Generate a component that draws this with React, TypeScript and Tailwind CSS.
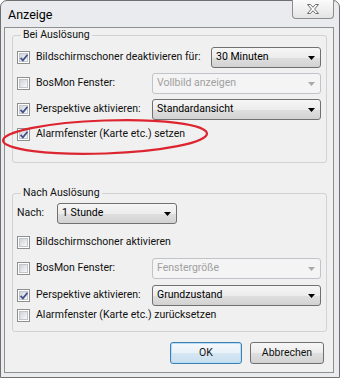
import React from "react";

function CheckBox({ checked }: { checked?: boolean }) {
  return (
    <span className="relative flex h-[13px] w-[13px] shrink-0 items-center justify-center border border-[#8e8f8f] bg-white">
      <span className="h-[9px] w-[9px] border border-[#c2c6cb] bg-[linear-gradient(135deg,#cfd3d8,#f8f8f8)]" />
      {checked && (
        <svg className="absolute left-[1px] top-[1px]" width="10" height="10" viewBox="0 0 10 10">
          <path d="M1.6 4.9 L3.9 7.4 L8.5 1.7" fill="none" stroke="#3e4f8c" strokeWidth="1.7" />
        </svg>
      )}
    </span>
  );
}

function Arrow({ disabled }: { disabled?: boolean }) {
  return (
    <svg width="7" height="4" viewBox="0 0 7 4" className="shrink-0">
      <path d="M0 0H7L3.5 4Z" fill={disabled ? "#a9a9a9" : "#000"} />
    </svg>
  );
}

function Select({ value, disabled, width }: { value: string; disabled?: boolean; width: string }) {
  return (
    <div
      className={
        "flex h-[21px] shrink-0 items-center justify-between rounded-[3px] border pl-[4px] pr-[5px] " +
        width +
        (disabled
          ? " border-[#c0c3c7] bg-[#f4f4f4] text-[#a0a0a0]"
          : " border-[#707070] bg-[linear-gradient(to_bottom,#f6f6f6_0%,#ececec_50%,#dfdfdf_51%,#d2d2d2_100%)] text-black")
      }
    >
      <span className="leading-none">{value}</span>
      <Arrow disabled={disabled} />
    </div>
  );
}

function Row({ checked, label, children, className }: { checked?: boolean; label: string; children?: React.ReactNode; className?: string }) {
  return (
    <div className={"flex items-center " + (className ?? "")}>
      <CheckBox checked={checked} />
      <span className="ml-[6px] leading-none">{label}</span>
      {children && <div className="ml-auto">{children}</div>}
    </div>
  );
}

function Button({ label, primary, width }: { label: string; primary?: boolean; width: string }) {
  return (
    <div
      className={
        "flex h-[22px] items-center justify-center rounded-[3px] border leading-none " +
        width +
        (primary
          ? " border-[#3c7fb1] bg-[linear-gradient(to_bottom,#f4f9fc_0%,#e8f2f9_50%,#d6e7f3_51%,#c8def0_100%)] shadow-[inset_0_0_0_1px_#b7dcf5]"
          : " border-[#707070] bg-[linear-gradient(to_bottom,#f6f6f6_0%,#ececec_50%,#dfdfdf_51%,#d2d2d2_100%)]")
      }
    >
      {label}
    </div>
  );
}

export default function App() {
  return (
    <div className="relative h-[380px] w-[340px] overflow-hidden bg-white font-[family-name:Roboto,sans-serif] text-[10.5px] text-[#111]">
      <div className="flex h-[378px] w-[340px] flex-col rounded-t-[7px] border border-[#6f6f6f] bg-[#e9ebee] pb-[4px] pl-[3px] pr-[5px]">
        {/* title bar */}
        <div className="flex h-[26px] shrink-0 items-start justify-between">
          <span className="pl-[4px] pt-[8px] text-[12.5px] leading-none text-black">Anzeige</span>
          <div className="-mt-[1px] flex h-[19px] w-[42px] items-center justify-center rounded-b-[4px] border border-t-0 border-[#8d8d8d] bg-[linear-gradient(to_bottom,#fbfbfb,#e4e4e4)]">
            <svg width="12" height="10" viewBox="0 0 12 10">
              <path
                d="M0.5 0.5 H3.5 L6 3.3 L8.5 0.5 H11.5 L7.6 5 L11.5 9.5 H8.5 L6 6.7 L3.5 9.5 H0.5 L4.4 5 Z"
                fill="#ffffff"
                stroke="#6d6d6d"
                strokeWidth="1"
                strokeLinejoin="round"
              />
            </svg>
          </div>
        </div>
        {/* client area */}
        <div className="flex flex-1 flex-col border border-[#8f8f8f] bg-[#f0f0f0] pl-[7px] pr-[6px]">
          <fieldset className="rounded-[3px] border border-[#d2d2d2] pb-[19px] pl-[4px] pr-[5px]">
            <legend className="ml-[4px] px-[2px] leading-[14px]">Bei Auslösung</legend>
            <div className="mt-[5px] flex flex-col">
              <Row checked label="Bildschirmschoner deaktivieren für:" className="h-[21px]">
                <Select value="30 Minuten" width="w-[110px]" />
              </Row>
              <Row label="BosMon Fenster:" className="mt-[5px] h-[21px]">
                <Select value="Vollbild anzeigen" disabled width="w-[169px]" />
              </Row>
              <Row checked label="Perspektive aktivieren:" className="mt-[5px] h-[21px]">
                <Select value="Standardansicht" width="w-[169px]" />
              </Row>
              <Row checked label="Alarmfenster (Karte etc.) setzen" className="mt-[6px] h-[17px]" />
            </div>
          </fieldset>

          <fieldset className="mt-[23px] rounded-[3px] border border-[#d2d2d2] pb-[7px] pl-[4px] pr-[5px]">
            <legend className="ml-[4px] px-[2px] leading-[14px]">Nach Auslösung</legend>
            <div className="mt-[3px] flex flex-col">
              <div className="flex h-[21px] items-center">
                <span className="w-[40px] leading-none">Nach:</span>
                <Select value="1 Stunde" width="w-[120px]" />
              </div>
              <Row label="Bildschirmschoner aktivieren" className="mt-[10px] h-[17px]" />
              <Row label="BosMon Fenster:" className="mt-[7px] h-[21px]">
                <Select value="Fenstergröße" disabled width="w-[169px]" />
              </Row>
              <Row checked label="Perspektive aktivieren:" className="mt-[6px] h-[21px]">
                <Select value="Grundzustand" width="w-[169px]" />
              </Row>
              <Row label="Alarmfenster (Karte etc.) zurücksetzen" className="mt-[1px] h-[17px]" />
            </div>
          </fieldset>

          <div className="mr-[3px] mt-[10px] flex justify-end gap-[8px]">
            <Button label="OK" primary width="w-[72px]" />
            <Button label="Abbrechen" width="w-[74px]" />
          </div>
        </div>
      </div>
      {/* red annotation ellipse */}
      <svg className="pointer-events-none absolute left-0 top-0" width="340" height="380" viewBox="0 0 340 380">
        <ellipse cx="105" cy="137" rx="102" ry="16.5" transform="rotate(-2 105 137)" fill="none" stroke="#dc2530" strokeWidth="2.2" />
      </svg>
    </div>
  );
}
